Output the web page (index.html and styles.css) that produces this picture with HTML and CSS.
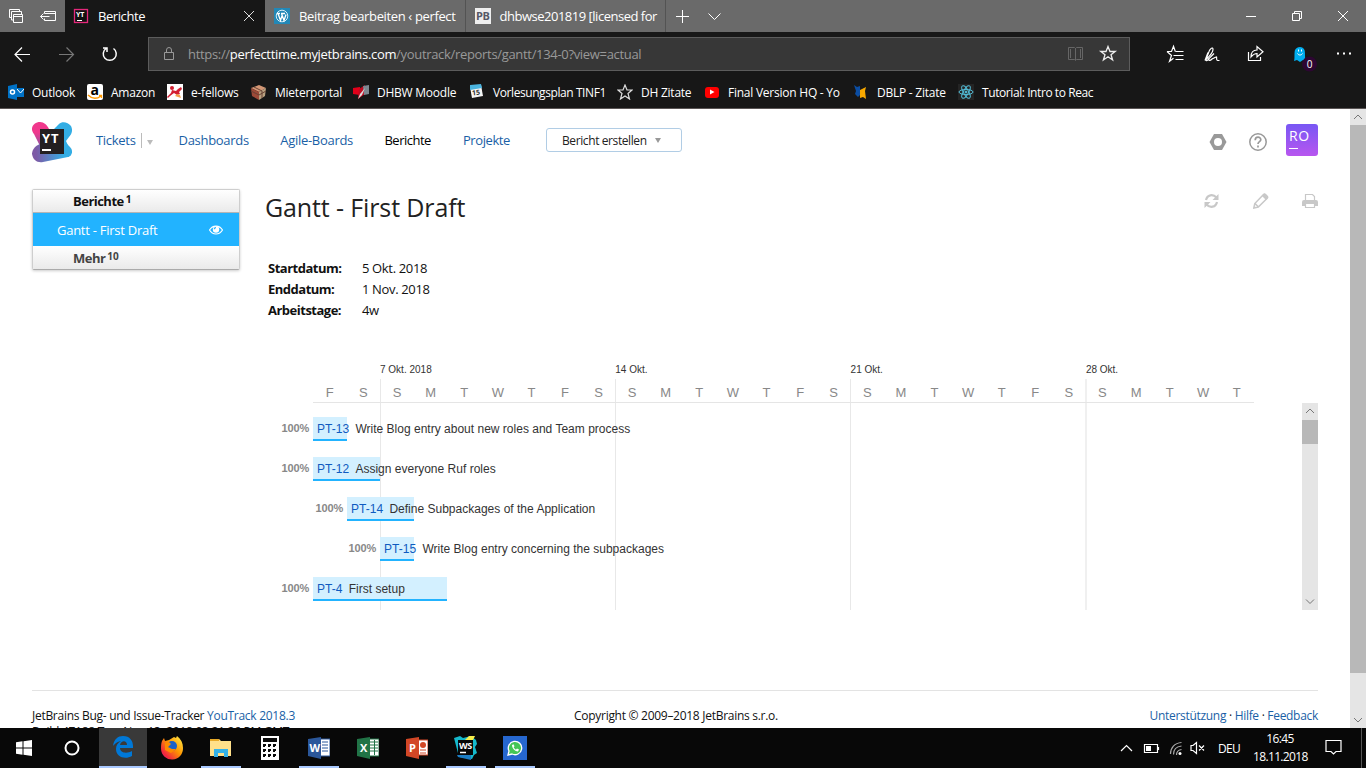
FILE: index.html
```html
<!DOCTYPE html>
<html lang="de">
<head>
<meta charset="utf-8">
<title>Berichte</title>
<link rel="stylesheet" href="styles.css">
</head>
<body>
<div class="screen">
  <header class="tabs">
    <div class="tab-tools">
      <svg width="65" height="32" fill="none" stroke="#fff"><path d="M11.500 17.500H9.500V9.500H19.500V11.500M13.500 20H11.500V11.500H21.500V14"/><path d="M13.500 14.500h9v8h-9zM13.500 16.500h9"/><path d="M44.500 13.500v-2h11v9h-11v-2M44.500 13.500h11M40.500 16.500h9M43.500 13.500l-3 3 3 3"/></svg>
    </div>
    <div class="tab active">
      <svg class="fav" width="16" height="16"><rect x="1.500" y="1.500" width="13" height="13" fill="#111" stroke="#e5287b" stroke-width="1.300"/><text x="3" y="9" class="yt-mini">YT</text><path d="M4 12.500h5" stroke="#fff"/></svg>
      <span class="tab-title">Berichte</span>
      <svg width="10" height="10" stroke="#ddd"><path d="M0 0l10 10M10 0L0 10"/></svg>
    </div>
    <div class="tab">
      <svg class="fav" width="16" height="16"><rect width="16" height="16" fill="#2288b7"/><circle cx="8" cy="8" r="5.800" fill="none" stroke="#d7edf7"/><path d="M3 5.500h3M7 5.500h4M4 5.500l2.500 7L8.200 7M7.500 5.500l2.500 7 2-6" fill="none" stroke="#fff" stroke-width="1.300"/></svg>
      <span class="tab-title second">Beitrag bearbeiten ‹ perfect</span>
    </div>
    <div class="tab">
      <svg class="fav" width="16" height="16"><rect width="16" height="16" fill="#eee"/><text x="1" y="12" class="pb-mini">PB</text></svg>
      <span class="tab-title wide">dhbwse201819 [licensed for</span>
    </div>
    <svg class="new-tab" width="60" height="32" fill="none" stroke="#fff"><path d="M10 16.500h13M16.500 10v13M42.500 13.500l6 6 6-6"/></svg>
    <svg class="win" width="138" height="32" fill="none" stroke="#fff"><path d="M18 16.500h10M64.500 13.500h7v7h-7zM66.500 13v-1.500h7v7H72M110 11l10 10M120 11l-10 10"/></svg>
  </header>

  <div class="toolbar">
    <svg class="nav-icons" width="148" height="44" fill="none" stroke="#fff" stroke-width="1.200"><path d="M15.500 22.500H30M22 15.500l-7 7 7 7"/><path stroke="#777" d="M59 22.500h14.500M66.500 15.500l7 7-7 7"/><path stroke-width="1.500" d="M113.500 16.500a6.500 6.500 0 1 1-7.500 0M103 16h4v4"/></svg>
    <div class="address">
      <svg width="12" height="16" fill="none" stroke="#999"><path d="M1.500 6.500h9v7h-9zM3.500 6V4a2.500 2.500 0 0 1 5 0v2"/></svg>
      <span class="url">https://<b>perfecttime.myjetbrains.com</b>/youtrack/reports/gantt/134-0?view=actual</span>
      <svg width="68" height="32" fill="none" stroke="#666"><path d="M7.500 9.500h6l1 1 1-1h6v12h-6l-1 1-1-1h-6zM14.500 10v12M9.500 11v9M19.500 11v9"/><path stroke="#eee" stroke-width="1.300" d="M47 8.500l2 5h5.200l-4.200 3.300 1.600 5.200-4.600-3.200-4.600 3.200 1.600-5.200-4.200-3.300H45z"/></svg>
    </div>
    <svg width="236" height="44" fill="none" stroke="#fff" stroke-width="1.200">
      <path d="M37 19.500h4.500l2-5.200 1.800 5.200M31 19.500M30.500 19.500M37 19.500l4.500 4-2 5.800 4-3M45.500 19.500h8M43.500 23.500h10M45.500 27.500h8"/>
      <path d="M75 28.500c3-3 8-7 8-11 0-3-3-1-4 2l-3 8c0 2 2 1 3-1l5-5M75 28.500l3-8M79 26c-1 3 1 3 3 1l4-2c1.500-1-.5 3 1.500 3.500h2"/>
      <path d="M118.500 20v8.500h12V25M121 25c0-5 3-7 6-7v-3.500l6 5.200-6 5.300v-3.500c-3 0-4 1-6 3.500z"/>
      <path d="M164 29c1-2 0-8 1-11 2-4 8-4 9.500 0 1 3 0 9 1.500 11l-3-1-3 2-3-2z" fill="#00aef0" stroke="none"/>
      <path d="M168.500 17.500v2M171.500 17.500v2M167.500 21.500c1 2 4 2 5 0" stroke-width="1"/>
      <circle cx="179.500" cy="32" r="7.500" fill="#2d0632" stroke="none"/><text class="badge" x="176.700" y="36">0</text>
      <path d="M207 21.500h2M213 21.500h2M219 21.500h2" stroke-width="2"/>
    </svg>
  </div>

  <nav class="favorites">
    <a><svg width="16" height="16"><path d="M7 4h9v9H7z" fill="#0072c6"/><path d="M9 5l3.500 4L16 5" stroke="#fff" fill="none"/><path d="M0 2l9-2v16l-9-2z" fill="#0072c6"/><circle cx="4.500" cy="8" r="2" stroke="#fff" stroke-width="1.500" fill="none"/></svg><span>Outlook</span></a>
    <a><svg width="16" height="16"><rect width="16" height="16" rx="2" fill="#fff"/><text x="3.500" y="10.500" class="amz">a</text><path d="M1 11c4 4 9 4 13 1M12 11.500h2.500V14" stroke="#f90" stroke-width="1.400" fill="none"/></svg><span>Amazon</span></a>
    <a><svg width="16" height="16"><path fill="#fff" d="M0 0h16v16H0z"/><circle cx="5" cy="4" r="2" fill="#d31f31"/><path d="M5 6l4 1 2-2 3-2 1 2-3 3 1 2-3 1-3-2-4 3-2 2-1-1 4-4z" fill="#d31f31"/><path d="M8 12l2-2 3 1 1 3-3-1z" fill="#f5a04a"/></svg><span>e-fellows</span></a>
    <a><svg width="16" height="16"><path d="M0 4l8-3 7 3-7 4z" fill="#d39775"/><path d="M0 4l8 4v8l-7-4z" fill="#9c4a38"/><path d="M8 8l7-4-1 8-6 4z" fill="#b8a080"/><path d="M3 3l8 4v7M0 7l8 4 7-4" stroke="#674234" fill="none"/></svg><span>Mieterportal</span></a>
    <a><svg width="16" height="16"><path d="M0 4l7-1v8l-7-1z" fill="#e2001a"/><path d="M6 5l6-4v9l-7 5z" fill="#c00a20"/><path d="M10 2l6-1v9l-5 1z" fill="#7c8790"/><path d="M5 15l2-5 5-6-3 7z" fill="#ddd"/></svg><span>DHBW Moodle</span></a>
    <a class="plan"><svg width="16" height="16"><path d="M1 3l11-2 2 11-11 2z" fill="#f5f5f5"/><path d="M1 1l11-1 1 4-12 2z" fill="#4bb4df"/><text x="3" y="11" class="cal" transform="rotate(-6 8 8)">15</text></svg><span>Vorlesungsplan TINF1</span></a>
    <a><svg width="16" height="16" fill="none" stroke="#ddd" stroke-width="1.200"><path d="M8 1l2 5h5l-4 3.500 1.500 5.500L8 12l-4.500 3L5 9.500 1 6h5z"/></svg><span>DH Zitate</span></a>
    <a><svg width="16" height="16"><rect x="1" y="3" width="14" height="11" rx="3" fill="#f00"/><path d="M6 5.500v5l4.500-2.500z" fill="#fff"/></svg><span>Final Version HQ - Yo</span></a>
    <a><svg width="16" height="16"><path d="M1 1l3 2 3-1v9l-2 2-3-3 1-3z" fill="#0b4da2"/><path d="M7 6l6-3-1 4 1 8-3-2-3 1z" fill="#f7a800"/></svg><span>DBLP - Zitate</span></a>
    <a class="plan"><svg width="16" height="16" fill="none" stroke="#53bcd6"><path fill="#242424" stroke="none" d="M0 0h16v16H0z"/><ellipse cx="8" cy="8" rx="7" ry="2.600"/><ellipse cx="8" cy="8" rx="7" ry="2.600" transform="rotate(60 8 8)"/><ellipse cx="8" cy="8" rx="7" ry="2.600" transform="rotate(120 8 8)"/><circle cx="8" cy="8" r="1" fill="#53bcd6"/></svg><span>Tutorial: Intro to Reac</span></a>
  </nav>

  <div class="viewport">
    <div class="page">
      <div class="top">
        <svg class="logo" width="40" height="41" viewBox="0 0 40 41">
          <defs><linearGradient id="lg" x1="0" y1="0" x2="1" y2="0"><stop offset=".1" stop-color="#7d5aa6"/><stop offset=".8" stop-color="#33ade4"/></linearGradient><linearGradient id="pk" x1="0" y1="0" x2="0" y2="1"><stop offset=".4" stop-color="#f0388c"/><stop offset="1" stop-color="#7d5aa6"/></linearGradient></defs>
          <path d="M22 7l5-5c3-3 9-2 12 2 2 4 1 8-2 11l-3 4 5 11-10 4-20-12z" fill="#33ade4"/>
          <path d="M2 12c-5-6 0-12 6-12 4 0 7 3 9 7l9 16-17 3z" fill="url(#pk)"/>
          <path d="M8 22c-6 2-8 7-8 10 1 6 5 9 11 8l25-5c5-2 5-7 2-10l-4-4z" fill="url(#lg)"/>
          <path d="M8 7h24v25H8z" fill="#231f20"/><text x="10" y="20.500" class="logo-text">YT</text><path d="M10 27h9v2h-9z" fill="#fff"/>
        </svg>
        <nav class="menu">
          <a>Tickets</a><i class="split"><svg width="6" height="5"><path d="M0 0h6L3 5z" fill="#bbb"/></svg></i><a>Dashboards</a><a>Agile-Boards</a><a class="current">Berichte</a><a>Projekte</a>
        </nav>
        <button class="create">Bericht erstellen<svg width="6" height="5"><path d="M0 0h6L3 5z" fill="#999"/></svg></button>
        <div class="user-tools">
          <svg width="18" height="16"><path d="M5 0h8l4.500 8L13 16H5L.5 8z" fill="#999"/><circle cx="9" cy="8" r="4" fill="#fff"/></svg>
          <svg width="18" height="18" fill="none" stroke="#999" stroke-width="1.500"><circle cx="9" cy="9" r="8.200"/><path stroke-width="1.700" d="M6.200 7.200c0-4 5.700-3.800 5.600-.5 0 2-2.800 2-2.800 4.300M9 12.500v2"/></svg>
          <div class="avatar">RO<i></i></div>
        </div>
      </div>

      <div class="main">
        <aside class="sidebar">
          <div class="group">Berichte<sup>1</sup></div>
          <div class="selected"><span>Gantt - First Draft</span><svg width="14" height="10" fill="none" stroke="#fff" stroke-width="1.200"><path d="M.5 5c3-5.300 10-5.300 13 0-3 5.300-10 5.300-13 0z"/><circle cx="7" cy="4.500" r="3.200" fill="#fff" stroke="none"/><path d="M5.300 4.300c0-1.200.7-1.700 1.700-1.700" stroke="#22b3ff"/></svg></div>
          <div class="group last">Mehr<sup>10</sup></div>
        </aside>
        <section class="report">
          <div class="heading">
            <h1>Gantt - First Draft</h1>
            <div class="actions">
              <svg width="16" height="16" fill="none" stroke="#c8c8c8" stroke-width="2.200"><path d="M2 7C3.200 1.500 9 .800 12.500 4.500M13 9C11.800 14.500 6 15.200 2.500 11.500"/><path d="M14.500 1v6h-6zM.5 15V9h6z" fill="#c8c8c8" stroke="none"/></svg>
              <svg width="16" height="16" fill="none" stroke="#c8c8c8" stroke-width="1.500"><path d="M.8 15l1-4.500L10.500 1.500q1-1 2 0l1.700 1.700q1 1 0 2L5.300 14zM2 10.500l3.500 3.500"/><path d="M9 3l4 4 2-2.500L11.500.5z" fill="#c8c8c8" stroke="none"/></svg>
              <svg width="16" height="16" fill="none" stroke="#c8c8c8" stroke-width="1.200"><path d="M3.500 8V1.500h7l2 2V8M3.500 10.500h9v4h-9z"/><path d="M0 13V9q0-2 2-2h12q2 0 2 2v4h-3v-3H3v3z" fill="#c8c8c8" stroke="none"/></svg>
            </div>
          </div>
          <dl class="facts"><dt>Startdatum:</dt><dd>5 Okt. 2018</dd><dt>Enddatum:</dt><dd>1 Nov. 2018</dd><dt>Arbeitstage:</dt><dd>4w</dd></dl>
          <div class="gantt">
            <div class="chart">
              <div class="weeks"><span>7 Okt. 2018</span><span>14 Okt.</span><span>21 Okt.</span><span>28 Okt.</span></div>
              <div class="timeline">
                <div class="days"><b>F</b><b>S</b><b>S</b><b>M</b><b>T</b><b>W</b><b>T</b><b>F</b><b>S</b><b>S</b><b>M</b><b>T</b><b>W</b><b>T</b><b>F</b><b>S</b><b>S</b><b>M</b><b>T</b><b>W</b><b>T</b><b>F</b><b>S</b><b>S</b><b>M</b><b>T</b><b>W</b><b>T</b></div>
                <div class="rows">
                  <div class="row"><em>100%</em><div class="bar d1"><a>PT-13</a>Write Blog entry about new roles and Team process</div></div>
                  <div class="row"><em>100%</em><div class="bar d2"><a>PT-12</a>Assign everyone Ruf roles</div></div>
                  <div class="row from1"><em>100%</em><div class="bar d2"><a>PT-14</a>Define Subpackages of the Application</div></div>
                  <div class="row from2"><em>100%</em><div class="bar d1"><a>PT-15</a>Write Blog entry concerning the subpackages</div></div>
                  <div class="row"><em>100%</em><div class="bar d4"><a>PT-4</a>First setup</div></div>
                </div>
              </div>
            </div>
            <div class="scroll inner"><svg width="16" height="17"><path d="M4 10l4-4 4 4"/></svg><i></i><svg class="end" width="16" height="17"><path d="M4 6.500l4 4 4-4"/></svg></div>
          </div>
        </section>
      </div>
      <footer>
        <div class="left">JetBrains Bug- und Issue-Tracker <a>YouTrack 2018.3</a><br>Build 47188 Tue, Nov 13, 2018 03:21:26 PM GMT</div>
        <div class="copy">Copyright © 2009–2018 JetBrains s.r.o.</div>
        <div class="links"><a>Unterstützung</a> · <a>Hilfe</a> · <a>Feedback</a></div>
      </footer>
    </div>
    <div class="scroll outer"><svg width="16" height="16"><path d="M4 10l4-4 4 4"/></svg><i></i><svg class="end" width="16" height="16"><path d="M4 6l4 4 4-4"/></svg></div>
  </div>

  <div class="taskbar">
    <div class="apps">
      <div class="app start"><svg width="16" height="16" fill="#fff"><path d="M0 2.300l6.500-1v6.200H0zM7.500 1.200L16 0v7.500H7.500zM0 8.500h6.500v6.200l-6.500-1zM7.500 8.500H16V16l-8.500-1.200z"/></svg></div>
      <div class="app search"><svg width="16" height="16"><circle cx="8" cy="8" r="6.500" fill="none" stroke="#fff" stroke-width="2"/></svg></div>
      <div class="app focus"><svg width="22" height="22"><path d="M1 10C2 3 6 0 11 0c7 0 10 5 10 10v2H8c0 5 7 6 12 3v5c-7 4-16 1-16-7 0-4 2-6 5-8-5 1-7 4-8 5zM8 9h7c0-5-6-5-7 0z" fill="#0078d7" fill-rule="evenodd"/></svg></div>
      <div class="app"><svg width="24" height="24"><defs><linearGradient id="ff" x1="1" y1="0" x2="0" y2="1"><stop stop-color="#fff44f"/><stop offset=".45" stop-color="#ff9500"/><stop offset=".8" stop-color="#f0263e"/><stop offset="1" stop-color="#d6208c"/></linearGradient></defs><path d="M2 5l2-3 1 3 4-1 5-3 2 1 1-2c4 3 6 7 6 12a11 11 0 0 1-22 1C1 10 1 8 2 5z" fill="url(#ff)"/><circle cx="12" cy="10" r="5" fill="#1b61c9"/><path d="M5 7l4-1 2 2-3 3 4 2 4 0-5 4-6-3z" fill="#ff8a00"/></svg></div>
      <div class="app open"><svg width="22" height="20"><path d="M0 1h9l2 2h10v15H0z" fill="#ffe08a"/><path d="M0 1h9v2H0z" fill="#e7a928"/><path d="M4 19v-8h14v8h-4v-4H8v4z" fill="#35b2e8"/></svg></div>
      <div class="app"><svg width="18" height="24"><path fill="#fff" d="M0 0h18v24H0z"/><path fill="#0a0a0a" d="M2 2h14v4H2zM2 8h3v2H4v1H2zM7 8h3v2H9v1H7zM12 8h3v2h-1v1h-2zM2 13h3v2H4v1H2zM7 13h3v2H9v1H7zM12 13h3v2h-1v1h-2zM2 18h3v2H4v1H2zM7 18h3v2H9v1H7zM12 18h3v2h-1v1h-2z"/></svg></div>
      <div class="app open"><svg width="22" height="22"><path d="M12 2h10v17H12z" fill="#fff" stroke="#2b579a"/><path d="M14 5h6M14 8h6M14 11h6M14 14h6" stroke="#2b579a"/><path d="M0 2l13-2v22L0 19z" fill="#2b579a"/><text x="1.500" y="15" class="office">W</text></svg></div>
      <div class="app"><svg width="22" height="22"><path d="M12 2h10v17H12z" fill="#fff" stroke="#217346"/><path d="M13 5h8M13 8h8M13 11h8M13 14h8M17.500 3v15" stroke="#217346"/><path d="M0 2l13-2v22L0 19z" fill="#217346"/><text x="3" y="15" class="office">X</text></svg></div>
      <div class="app"><svg width="22" height="22"><path d="M12 3h10v15H12z" fill="#fff" stroke="#d24726"/><path d="M14 13h6M14 16h6" stroke="#d24726"/><circle cx="17" cy="8" r="3" fill="#d24726"/><path d="M0 2l13-2v22L0 19z" fill="#d24726"/><text x="3" y="15" class="office">P</text></svg></div>
      <div class="app open"><svg width="24" height="24"><path d="M0 2l6-2 3 2 8-2 5 4 1 4-2 3 2 6-3 2-2 4-13-2z" fill="#15b9cc"/><path d="M11 4l4-4h6l-2 4z" fill="#f7ee4b"/><path d="M3 19h14v5l-13-3z" fill="#1c7dc4"/><path fill="#070707" d="M4 4h15v15H4z"/><text x="5" y="12.500" class="ws">WS</text><path d="M6 16.500h6" stroke="#fff" stroke-width="1.500"/></svg></div>
      <div class="app open"><svg width="24" height="24"><path fill="#2667cf" d="M0 0h24v24H0z"/><path d="M5 19l1-4a6.700 6.700 0 1 1 3 3z" fill="#45c655" stroke="#fff" stroke-width="1.300"/><path d="M9 9c0 3.500 3 6.500 6 6.500l1-2-2-1-1 1c-1.200-.5-1.800-1.200-2.300-2.300l.8-1-1-2z" fill="#fff"/></svg></div>
    </div>
    <div class="tray">
      <svg width="92" height="40" fill="none" stroke="#fff" stroke-width="1.200"><path d="M1 23l5.500-5.500L12 23"/><path d="M24.500 16.500h13v8h-13zM38.500 19v3"/><path fill="#fff" stroke="none" d="M26 18h5v5h-5z"/><path d="M50.500 26c0-6 4-11 11-11.500M53.500 26.500c0-5 3-8 8-8.500M56.500 27c0-3 2-5 5-5.500" stroke="#aaa"/><circle cx="60" cy="25.500" r="1.500" fill="#fff" stroke="none"/><path d="M71 17.500h2l3.500-3v11l-3.500-3h-2zM79 17.500l5 5M84 17.500l-5 5"/></svg>
      <span class="lang">DEU</span>
      <span class="clock">16:45<br>18.11.2018</span>
      <svg class="note" width="18" height="18" fill="none" stroke="#fff" stroke-width="1.200"><path d="M1 1.500h15v11h-5L8.500 15 6 12.500H1z"/></svg>
      <i class="peek"></i>
    </div>
  </div>
</div>
</body>
</html>
```
FILE: styles.css
```css
* { box-sizing: border-box; }
body { margin: 0; font: 13px "Open Sans", "Noto Sans", sans-serif; color: #111; }
svg { display: block; flex: none; }
i, em { font-style: normal; }
.screen { width: 1366px; height: 768px; overflow: hidden; display: flex; flex-direction: column; background: #fff; }

/* browser frame */
.tabs { height: 32px; flex: none; display: flex; background: #6a6a6a; color: #fff; }
.tab { width: 200px; padding: 0 8px 0 9px; display: flex; align-items: center; border-right: 1px solid #535353; }
.tab:nth-child(3), .tab:nth-child(4) { width: 200.500px; }
.tab.active { background: #171717; border: 0; padding: 0 11px 0 8px; }
.tab-title { flex: 1; margin-left: 9px; white-space: nowrap; letter-spacing: -.42px; }
.tab-title.second { letter-spacing: -.36px; }
.tab-title.wide { letter-spacing: -.49px; }
.win { margin-left: auto; }
.toolbar { height: 44px; flex: none; display: flex; background: #171717; }
.address { width: 982px; height: 34px; margin-top: 5px; border: 1px solid #5c5c5c; background: #373737; display: flex; align-items: center; padding-left: 14px; }
.url { flex: 1; margin-left: 13px; color: #999; letter-spacing: -.32px; white-space: nowrap; }
.url b { font-weight: 400; color: #fff; }
.favorites { height: 33px; flex: none; display: grid; grid-template-columns: 79px 80px 84px 102px 116px 148px 87px 149px 105px 136px; padding-left: 8px; background: #171717; border-bottom: 1px solid #5a5555; color: #fff; font-size: 12px; }
.favorites a { display: flex; align-items: center; gap: 8px; min-width: 0; }
.favorites span { white-space: nowrap; letter-spacing: -.24px; }
.favorites .plan span { letter-spacing: -.42px; }
.yt-mini { font: bold 7px "Open Sans", sans-serif; fill: #fff; }
.pb-mini { font: bold 11px "Open Sans", sans-serif; fill: #555866; letter-spacing: -.5px; }
.badge { font: 10px "Open Sans", sans-serif; fill: #fff; stroke: none; }
.amz { font: bold 14px "Open Sans", sans-serif; }
.cal { font: bold 7px "Open Sans", sans-serif; fill: #333; }

/* page */
.viewport { height: 619px; flex: none; display: flex; overflow: hidden; }
.page { width: 1350px; padding: 0 32px; }
.page a { color: #1a5fa6; }
.top { height: 80px; display: flex; align-items: flex-start; padding-top: 13px; }
.menu { display: flex; margin-left: 24px; padding-top: 9px; line-height: 18px; letter-spacing: -.3px; width: 450px; white-space: nowrap; }
.menu a { margin-right: 31.500px; }
.menu a:first-child { margin-right: 5px; }
.page .menu .current { color: #000; letter-spacing: -.5px; margin-right: 32px; }
.menu a:last-child { letter-spacing: -.4px; }
.split { border-left: 1px solid #bbb; height: 15px; margin: 2px 26px 0 0; padding: 7px 0 0 5px; }
.logo-text { font: bold 13px "Open Sans", sans-serif; fill: #fff; letter-spacing: .8px; }
.create { width: 136px; height: 24px; margin-top: 6px; padding: 0 0 0 15px; display: flex; align-items: center; gap: 8px; background: #fff; border: 1px solid #b1cde5; border-radius: 3px; font: 12px "Open Sans", sans-serif; letter-spacing: -.4px; white-space: nowrap; color: #222; }
.user-tools { margin-left: auto; display: flex; align-items: center; gap: 22px; padding-top: 2px; }
.user-tools svg { margin-top: 4px; }
.avatar { width: 32px; height: 32px; margin-left: -3px; border-radius: 3px; padding: 3px; background: linear-gradient(#7857f4, #b856ef); color: #fff; font-size: 14px; line-height: 18px; letter-spacing: .7px; }
.avatar i { display: block; width: 9px; height: 1px; background: #fff; margin-top: 3px; }

.main { height: 501px; display: flex; }
.sidebar { width: 208px; height: 81px; border: 1px solid #cecece; border-bottom-color: #aaa; border-radius: 2px; box-shadow: 0 1px 3px #0003; }
.group { height: 23px; padding-left: 40px; background: linear-gradient(#fff, #eaeaea); border-bottom: 1px solid #b5b5b5; font-weight: 700; line-height: 23px; letter-spacing: -.52px; }
.group.last { color: #444; border: 0; line-height: 25px; }
.group sup { font-size: 10px; line-height: 0; margin-left: 2px; vertical-align: 3px; letter-spacing: 0; }
.selected { height: 33px; display: flex; align-items: center; justify-content: space-between; padding: 0 16px 0 24px; color: #fff; background: #22b3ff; letter-spacing: -.26px; }
.report { width: 1053px; margin-left: 25px; }
.heading { height: 68px; display: flex; justify-content: space-between; }
h1 { margin: 0; font-size: 25px; font-weight: 400; line-height: 37px; letter-spacing: -.12px; color: #222; }
.actions { display: flex; gap: 33px; padding-top: 4px; }
.facts { margin: 0; padding: 1px 0 0 3px; display: grid; grid-template-columns: 94px 120px; line-height: 21px; letter-spacing: -.35px; }
.facts dt { font-weight: 700; letter-spacing: -.5px; }
.facts dd { margin: 0; }

.gantt { margin-top: 41px; display: flex; justify-content: space-between; align-items: flex-end; font-family: "Liberation Sans", Arial, sans-serif; }
.chart { width: 941px; margin-left: 48px; }
.weeks { height: 17px; display: flex; padding-left: 67px; font-size: 10px; line-height: 16px; color: #333; }
.weeks span { width: 235.300px; flex: none; }
.weeks span:last-child { width: 100px; }
.timeline { height: 231px; background: linear-gradient(#e8e8e8, #e8e8e8) 67px 0 / 1px 100% no-repeat, linear-gradient(#e8e8e8, #e8e8e8) 302px 0 / 1px 100% no-repeat, linear-gradient(#e8e8e8, #e8e8e8) 537px 0 / 1px 100% no-repeat, linear-gradient(#f0f0f0, #f0f0f0) 772px 0 / 2px 100% no-repeat; }
.days { height: 24px; display: grid; grid-template-columns: repeat(28, 33.607px); border-bottom: 1px solid #e5e5e5; text-align: center; line-height: 28px; color: #888; }
.days b { font-weight: 400; }
.rows { height: 207px; padding-top: 14px; margin-left: -35px; font-size: 12px; color: #333; }
.row { height: 40px; display: flex; }
.from1 { padding-left: 34px; }
.from2 { padding-left: 67px; }
.row em { width: 35px; padding-left: 3.500px; color: #888; font-size: 11px; font-weight: 700; line-height: 23px; letter-spacing: -.1px; }
.bar { height: 24px; padding-left: 4px; line-height: 24px; border-bottom: 2px solid #22b3ff; background: #d3f0ff; white-space: nowrap; letter-spacing: .01px; }
.page .bar a { margin-right: 6.300px; color: #0f5bc0; }
.d1 { width: 34px; } .d2 { width: 67px; } .d4 { width: 134px; }
.scroll { width: 16px; flex: none; background: #e5e5e5; display: flex; flex-direction: column; }
.scroll path { fill: none; stroke: #777; }
.scroll i { background: #b8b8b8; }
.scroll .end { margin-top: auto; }
.inner { height: 207px; }
.inner i { height: 24px; }
.outer i { height: 548px; }

footer { border-top: 1px solid #e3e3e3; padding-top: 17px; display: grid; grid-template-columns: 542px 1fr 1fr; font-size: 12px; line-height: 16px; letter-spacing: -.28px; white-space: nowrap; }
.links { text-align: right; letter-spacing: -.3px; }

/* taskbar */
.taskbar { height: 40px; flex: none; display: flex; justify-content: space-between; background: #080808; color: #fff; }
.apps { display: flex; }
.app { width: 49px; display: flex; align-items: center; justify-content: center; }
.app.start { width: 48px; }
.app.search { width: 48px; margin-right: 3px; }
.app.focus { width: 48px; border-bottom: 2px solid #a9c9ff; background: #393939; }
.app.open { background: linear-gradient(#a9c9ff, #a9c9ff) center bottom / 40px 2px no-repeat; }
.office { font: bold 11px "Open Sans", sans-serif; fill: #fff; }
.ws { font: bold 9px "Open Sans", sans-serif; fill: #fff; letter-spacing: -.5px; }
.tray { width: 246px; display: flex; align-items: center; font-size: 12px; }
.lang { width: 35px; margin-left: 6px; letter-spacing: -.7px; }
.clock { width: 54px; text-align: center; line-height: 18px; letter-spacing: -.65px; white-space: nowrap; }
.note { margin-left: 18px; }
.peek { width: 1px; height: 40px; margin: 0 4px 0 auto; background: #555; }
```
